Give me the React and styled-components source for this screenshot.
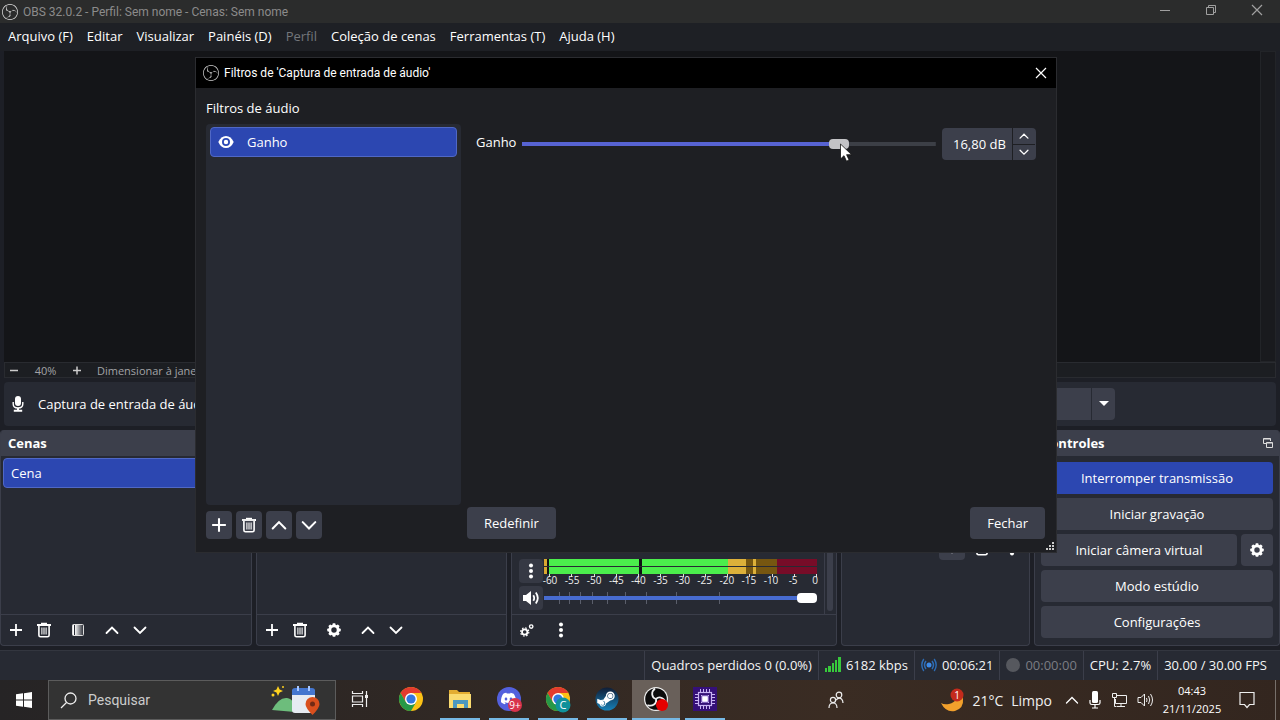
import { useState } from "react";
import styled, { createGlobalStyle } from "styled-components";
import { SiObsstudio, SiDiscord } from "react-icons/si";
import { FaSteamSymbol } from "react-icons/fa";

const METER_LABELS = [-60, -55, -50, -45, -40, -35, -30, -25, -20, -15, -10, -5, 0];
const FADER_TICKS = [15, 25, 36, 48, 63, 81, 102, 132, 175];

const PlusIcon = ({ size = 14 }) => (
  <svg width={size} height={size} viewBox="0 0 14 14" stroke="#fff" strokeWidth="1.8">
    <path d="M7 1v12M1 7h12" />
  </svg>
);

const TrashIcon = () => (
  <svg width="16" height="16" viewBox="0 0 16 16" fill="none" stroke="#fff">
    <path d="M1 3h14" strokeWidth="1.8" />
    <path d="M5 1.5h6" strokeWidth="1.4" />
    <path d="M2.9 4v9.2q0 1.6 1.6 1.6h7q1.6 0 1.6-1.6V4" strokeWidth="1.6" />
    <path d="M5.9 5.5v7M8 5.5v7M10.1 5.5v7" strokeWidth="1.1" />
  </svg>
);

const ChevronIcon = ({ down, size = 14, stroke = 1.8 }) => (
  <svg
    width={size}
    height={size}
    viewBox="0 0 14 14"
    fill="none"
    stroke="#fff"
    strokeWidth={stroke}
    strokeLinecap="round"
  >
    <path d={down ? "M1.5 4.5L7 10l5.5-5.5" : "M1.5 10L7 4.5l5.5 5.5"} />
  </svg>
);

const GearIcon = ({ size = 14 }) => (
  <svg width={size} height={size} viewBox="0 0 16 16">
    <circle cx="8" cy="8" r="4.7" fill="none" stroke="#fff" strokeWidth="3.2" />
    {[0, 45, 90, 135, 180, 225, 270, 315].map((angle) => (
      <rect
        key={angle}
        x="6.3"
        y="0.3"
        width="3.4"
        height="3"
        rx="0.8"
        fill="#fff"
        transform={`rotate(${angle} 8 8)`}
      />
    ))}
  </svg>
);

const GearsIcon = () => (
  <svg width="14" height="14" viewBox="0 0 14 14" fill="none" stroke="#fff">
    <circle cx="4.7" cy="9" r="2.7" strokeWidth="1.8" />
    <circle cx="4.7" cy="9" r="4.1" strokeWidth="1.2" strokeDasharray="1.6 1.62" />
    <circle cx="11.2" cy="3.6" r="1.7" strokeWidth="1.4" />
  </svg>
);

const DotsIcon = () => (
  <svg width="6" height="16" viewBox="0 0 6 16" fill="#fff">
    <circle cx="3" cy="2.5" r="2" />
    <circle cx="3" cy="8" r="2" />
    <circle cx="3" cy="13.5" r="2" />
  </svg>
);

const FilterIcon = () => (
  <svg width="14" height="14" viewBox="0 0 14 14">
    <defs>
      <linearGradient id="fade">
        <stop offset="0.2" stopColor="#fff" />
        <stop offset="1" stopColor="#272a33" />
      </linearGradient>
    </defs>
    <rect x="1.5" y="1.5" width="11" height="11" rx="1" fill="url(#fade)" stroke="#ddd" />
    <path d="M3.5 2v10" stroke="#272a33" />
  </svg>
);

const MicIcon = () => (
  <svg width="12" height="16" viewBox="0 0 12 16" fill="none" stroke="#fff">
    <rect x="3" y="0" width="6" height="10" rx="3" fill="#fff" stroke="none" />
    <path d="M1.2 6v2q0 4 4.8 4t4.8-4V6" strokeWidth="1.4" />
    <path d="M6 12v3M1.8 14.8h8.4" strokeWidth="2" />
  </svg>
);

const EyeIcon = () => (
  <svg width="16" height="12" viewBox="0 0 16 12">
    <path d="M8 0Q13 0 15.7 6 13 12 8 12T.3 6Q3 0 8 0z" fill="#fff" />
    <circle cx="8" cy="6" r="3.1" fill="#fff" stroke="#2b49b6" strokeWidth="1.8" />
  </svg>
);

const SpeakerIcon = () => (
  <svg width="18" height="16" viewBox="0 0 18 16" fill="none" stroke="#fff">
    <path d="M1 5h3l5-4v14l-5-4H1z" fill="#fff" stroke="none" />
    <path d="M11.3 5.2q1.8 2.8 0 5.6M13.8 2.5q4 5.5 0 11" strokeWidth="1.8" />
  </svg>
);

const CloseIcon = () => (
  <svg width="12" height="12" viewBox="0 0 12 12" stroke="currentColor" strokeWidth="1.2">
    <path d="M1 1l10 10M11 1L1 11" />
  </svg>
);

const RestoreIcon = () => (
  <svg width="12" height="12" viewBox="0 0 12 12" fill="none" stroke="currentColor">
    <path d="M1.5 3.5h7v7h-7zM3.5 3.5v-2h7v7h-2" />
  </svg>
);

const PopOutIcon = () => (
  <svg width="12" height="12" viewBox="0 0 12 12" fill="none" stroke="#ddd">
    <path d="M4 6.5H1.5v-5h7V4M1.5 2h7" />
    <path d="M4.5 5.5h6v5h-6zM4.5 6h6" />
  </svg>
);

const ChromeIcon = ({ badge }) => (
  <svg width="28" height="28" viewBox="-1 0 28 28">
    <circle cx="13" cy="14" r="12" fill="#fbc116" />
    <path d="M13 8h10.4A12 12 0 0 0 2.6 8l5.2 9z" fill="#e33b2e" />
    <path d="M2.6 8A12 12 0 0 0 13 26l5.2-9-5.2 3-5.2-3z" fill="#279847" />
    <circle cx="13" cy="14" r="6" fill="#fff" />
    <circle cx="13" cy="14" r="4.6" fill="#3277e0" />
    {badge && (
      <>
        <circle cx="18" cy="20" r="7.5" fill="#10919a" />
        <text x="18" y="24" textAnchor="middle" fill="#fff" fontSize="11">
          {badge}
        </text>
      </>
    )}
  </svg>
);

const FolderIcon = () => (
  <svg width="24" height="22" viewBox="0 0 24 22">
    <path d="M1 2h8l2 2h11v16H1z" fill="#e3ad32" />
    <path d="M1 6h22v14H1z" fill="#fadb70" />
    <path d="M5 12h15v8h-4v-4H9v4H5z" fill="#4c98c0" />
  </svg>
);

const CpuIcon = () => (
  <svg width="24" height="24" viewBox="0 0 24 24" fill="none" stroke="#c9b3f5">
    <rect width="24" height="24" fill="#351078" stroke="none" />
    <rect x="5.5" y="5.5" width="13" height="13" strokeWidth="1.2" />
    <path d="M7.5 2v3M10.5 2v3M13.5 2v3M16.5 2v3M7.5 19v3M10.5 19v3M13.5 19v3M16.5 19v3M2 7.5h3M2 10.5h3M2 13.5h3M2 16.5h3M19 7.5h3M19 10.5h3M19 13.5h3M19 16.5h3" />
    <rect x="9" y="9" width="6" height="6" fill="#fff" />
    <path d="M8 8l2 2M16 8l-2 2M8 16l2-2M16 16l-2-2" />
  </svg>
);

const TaskViewIcon = () => (
  <svg width="18" height="18" viewBox="0 0 18 18" fill="none" stroke="#eee" strokeWidth="1.2">
    <path d="M1.5 1v2.5h10V1M1.5 17v-2.5h10V17M1.5 6h10v6h-10zM15.5 1v16" />
    <path d="M14 6.5h3" strokeWidth="3" />
  </svg>
);

const SearchArt = () => (
  <svg width="50" height="30" viewBox="1 0 50 30">
    <path d="M2 25q7-13 15-12 8 1 8 14z" fill="#6dbd7c" />
    <path d="M8 1l1.6 3.6L13 6 9.6 7.6 8 11 6.5 7.6 3 6l3.5-1.4z" fill="#ffd21f" />
    <circle cx="3" cy="10" r="1.5" fill="#ffd21f" />
    <circle cx="13" cy="2" r="1" fill="#ffd21f" />
    <rect x="22" y="4" width="23" height="24" rx="3" fill="#e6ebf2" />
    <path d="M22 10V6q0-3 3-3h17q3 0 3 3v4z" fill="#4476cf" />
    <path d="M28 1v5M39 1v5" stroke="#a8c8ff" strokeWidth="2" />
    <path d="M42.5 30q-7-7-7-11a7 7 0 0 1 14 0q0 4-7 11z" fill="#d94f1d" />
    <circle cx="42.5" cy="19" r="2.5" fill="#712a15" />
  </svg>
);

const WeatherIcon = () => (
  <svg width="28" height="26" viewBox="0 0 28 26">
    <path d="M16 2q4 11-7 14-5 1-8-1 5 10 14 8 9-3 8-12-1-6-7-9z" fill="#f2a02c" />
    <circle cx="17" cy="7" r="6.5" fill="#c42b1c" />
    <text x="17" y="11" textAnchor="middle" fill="#fff" fontSize="10">
      1
    </text>
  </svg>
);

const LevelMeter = () => (
  <svg width="280" height="27" viewBox="-4 0 280 27">
    <rect x="0" width="3" height="15" fill="#d9a730" />
    <rect x="3" width="2" height="15" fill="#101014" />
    <rect x="5" width="179" height="15" fill="#4bee4c" />
    <rect x="95" width="3" height="15" fill="#101014" />
    <rect x="184" width="18" height="15" fill="#dcb03a" />
    <rect x="202" width="31" height="15" fill="#765610" />
    <rect x="209" width="3" height="15" fill="#dcb03a" />
    <rect x="233" width="40" height="15" fill="#770c28" />
    <rect y="7" width="273" height="1" fill="#272a33" />
    {METER_LABELS.map((label, i) => (
      <g key={label}>
        <rect x={Math.round(5 + i * 22.25)} y="15" width="1" height="3" fill="#ddd" />
        <text
          x={i === 12 ? 271 : 6 + i * 22.1}
          y="25"
          textAnchor="middle"
          fill="#eee"
          fontSize="10"
        >
          {label}
        </text>
      </g>
    ))}
  </svg>
);

const App = () => {
  const [gain, setGain] = useState(16.8);
  const [volume, setVolume] = useState(100);
  const gainText = `${gain.toFixed(2).replace(".", ",")} dB`;

  return (
    <Page>
      <GlobalStyle />
      <TitleBar>
        <SiObsstudio size={16} color="#ddd" />
        <TitleText>OBS 32.0.2 - Perfil: Sem nome - Cenas: Sem nome</TitleText>
        <WindowButton aria-label="Minimizar">
          <svg width="12" height="12" stroke="currentColor">
            <path d="M1 6.5h10" />
          </svg>
        </WindowButton>
        <WindowButton aria-label="Restaurar">
          <RestoreIcon />
        </WindowButton>
        <WindowButton aria-label="Fechar janela">
          <CloseIcon />
        </WindowButton>
      </TitleBar>

      <MenuBar>
        <MenuItem>Arquivo (F)</MenuItem>
        <MenuItem>Editar</MenuItem>
        <MenuItem>Visualizar</MenuItem>
        <MenuItem>Painéis (D)</MenuItem>
        <MenuItem disabled>Perfil</MenuItem>
        <MenuItem>Coleção de cenas</MenuItem>
        <MenuItem>Ferramentas (T)</MenuItem>
        <MenuItem>Ajuda (H)</MenuItem>
      </MenuBar>

      <Preview>
        <Canvas />
        <PreviewScroll />
      </Preview>
      <ZoomBar>
        <ZoomButton aria-label="Diminuir zoom">
          <svg width="10" height="10" stroke="#ccc" strokeWidth="1.5">
            <path d="M1 4.5h8" />
          </svg>
        </ZoomButton>
        <ZoomValue>40%</ZoomValue>
        <ZoomButton aria-label="Aumentar zoom">
          <svg width="10" height="10" stroke="#ccc" strokeWidth="1.5">
            <path d="M1 4.5h8M5 .5v8" />
          </svg>
        </ZoomButton>
        <ZoomMode>Dimensionar à janela</ZoomMode>
      </ZoomBar>

      <ContextBar>
        <MicIcon />
        <ContextName>Captura de entrada de áudio</ContextName>
        <DeviceBox>
          <DeviceArrow aria-label="Dispositivo">
            <svg width="10" height="6" fill="#fff">
              <path d="M0 0h10L5 5z" />
            </svg>
          </DeviceArrow>
        </DeviceBox>
      </ContextBar>

      <Docks>
        <Dock>
          <DockHeader>Cenas</DockHeader>
          <SceneList>
            <SceneItem>Cena</SceneItem>
          </SceneList>
          <DockFooter>
            <ToolButton aria-label="Adicionar cena">
              <PlusIcon />
            </ToolButton>
            <ToolButton aria-label="Remover cena">
              <TrashIcon />
            </ToolButton>
            <ToolButton aria-label="Filtros da cena" $wide>
              <FilterIcon />
            </ToolButton>
            <ToolButton aria-label="Mover cena para cima">
              <ChevronIcon />
            </ToolButton>
            <ToolButton aria-label="Mover cena para baixo">
              <ChevronIcon down />
            </ToolButton>
          </DockFooter>
        </Dock>

        <Dock>
          <DockHeader />
          <DockBody />
          <DockFooter>
            <ToolButton aria-label="Adicionar fonte">
              <PlusIcon />
            </ToolButton>
            <ToolButton aria-label="Remover fonte">
              <TrashIcon />
            </ToolButton>
            <ToolButton aria-label="Propriedades da fonte" $wide>
              <GearIcon />
            </ToolButton>
            <ToolButton aria-label="Mover fonte para cima">
              <ChevronIcon />
            </ToolButton>
            <ToolButton aria-label="Mover fonte para baixo">
              <ChevronIcon down />
            </ToolButton>
          </DockFooter>
        </Dock>

        <Dock>
          <DockHeader />
          <MixerBody>
            <MixerTracks>
              <MixerRow>
                <MixerButton aria-label="Opções de áudio">
                  <DotsIcon />
                </MixerButton>
                <LevelMeter />
              </MixerRow>
              <MixerRow>
                <MixerButton aria-label="Silenciar">
                  <SpeakerIcon />
                </MixerButton>
                <Fader>
                  <svg width="273" height="14" stroke="#5a5e6b">
                    {FADER_TICKS.map((x) => (
                      <path key={x} d={`M${x + 0.5} 1v12`} />
                    ))}
                  </svg>
                  <Slider
                    aria-label="Volume"
                    min="0"
                    max="100"
                    value={volume}
                    onChange={(e) => setVolume(Number(e.target.value))}
                    $fill="#476bd0"
                    $knob="#fff"
                    style={{ "--pos": `${volume}%` }}
                  />
                </Fader>
              </MixerRow>
            </MixerTracks>
            <MixerScroll />
          </MixerBody>
          <DockFooter>
            <ToolButton aria-label="Propriedades avançadas de áudio">
              <GearsIcon />
            </ToolButton>
            <ToolButton aria-label="Menu do mixer" $wide>
              <DotsIcon />
            </ToolButton>
          </DockFooter>
        </Dock>

        <Dock>
          <DockHeader />
          <TransitionBody>
            <TransitionButton aria-label="Adicionar transição" $active>
              <PlusIcon size={12} />
            </TransitionButton>
            <TransitionButton aria-label="Remover transição">
              <TrashIcon />
            </TransitionButton>
            <TransitionButton aria-label="Opções de transição">
              <DotsIcon />
            </TransitionButton>
          </TransitionBody>
        </Dock>

        <Dock>
          <DockHeader>
            Controles
            <PopOutIcon />
          </DockHeader>
          <ControlsBody>
            <Button $primary>Interromper transmissão</Button>
            <Button>Iniciar gravação</Button>
            <CameraRow>
              <Button>Iniciar câmera virtual</Button>
              <Button aria-label="Configurar câmera virtual">
                <GearIcon />
              </Button>
            </CameraRow>
            <Button>Modo estúdio</Button>
            <Button>Configurações</Button>
          </ControlsBody>
        </Dock>
      </Docks>

      <StatusBar>
        <StatusItem>Quadros perdidos 0 (0.0%)</StatusItem>
        <StatusItem>
          <svg width="16" height="15" fill="#37c93c">
            <path d="M0 11h2v4H0zM3 9h3v6H3zM7 6h2v9H7zM10 3h2v12h-2zM13 0h3v15h-3z" />
          </svg>
          6182 kbps
        </StatusItem>
        <StatusItem>
          <svg width="16" height="16" viewBox="0 0 16 16" fill="none" stroke="#2d6cb5">
            <circle cx="8" cy="8" r="2.5" fill="#3d8ae6" stroke="none" />
            <path d="M5 4q-3 4 0 8M11 4q3 4 0 8" strokeWidth="1.5" />
            <path d="M2.8 2q-4 6 0 12M13.2 2q4 6 0 12" strokeWidth="1.4" />
          </svg>
          00:06:21
        </StatusItem>
        <StatusItem $dim>
          <svg width="14" height="14" fill="#56585e">
            <circle cx="7" cy="7" r="7" />
          </svg>
          00:00:00
        </StatusItem>
        <StatusItem>CPU: 2.7%</StatusItem>
        <StatusItem>30.00 / 30.00 FPS</StatusItem>
      </StatusBar>

      <TaskBar>
        <StartButton aria-label="Iniciar">
          <svg width="16" height="16" fill="#fff">
            <path d="M0 2.3L7 1.3V7.5H0zM8 1.2L16 0v7.5H8zM0 8.5h7v6.2l-7-1zM8 8.5h8V16l-8-1.2z" />
          </svg>
        </StartButton>
        <SearchBox>
          <svg width="17" height="17" fill="none" stroke="#eee" strokeWidth="1.3">
            <circle cx="10.5" cy="6.5" r="5.5" />
            <path d="M6.5 10.5L1 16" />
          </svg>
          <SearchInput placeholder="Pesquisar" aria-label="Pesquisar" />
          <SearchArt />
        </SearchBox>
        <Apps>
          <AppButton aria-label="Visão de tarefas">
            <TaskViewIcon />
          </AppButton>
          <AppButton aria-label="Chrome">
            <ChromeIcon />
          </AppButton>
          <AppButton aria-label="Explorador de arquivos" $open>
            <FolderIcon />
          </AppButton>
          <AppButton aria-label="Discord" $open>
            <svg width="28" height="28" viewBox="0 0 28 28">
              <circle cx="14" cy="14" r="12" fill="#5360dd" />
              <SiDiscord x="6" y="6" size={15} color="#fff" />
              <circle cx="20" cy="20" r="7" fill="#d8334c" />
              <text x="20" y="24" textAnchor="middle" fill="#fff" fontSize="10">
                9+
              </text>
            </svg>
          </AppButton>
          <AppButton aria-label="Chrome, perfil C" $open>
            <ChromeIcon badge="C" />
          </AppButton>
          <AppButton aria-label="Steam" $open>
            <svg width="24" height="24" viewBox="0 0 24 24">
              <defs>
                <linearGradient id="steam" x2="0" y2="1">
                  <stop offset="0" stopColor="#111d35" />
                  <stop offset="1" stopColor="#1681b8" />
                </linearGradient>
              </defs>
              <circle cx="12" cy="12" r="11.5" fill="url(#steam)" />
              <FaSteamSymbol x="1" y="2" size={20} color="#fff" />
            </svg>
          </AppButton>
          <AppButton aria-label="OBS" $open $active>
            <svg width="28" height="28" viewBox="0 0 28 28">
              <circle cx="14" cy="14" r="12" fill="#eee" />
              <circle cx="14" cy="14" r="10.8" fill="#0b0b0b" />
              <g fill="none" stroke="#eee" strokeWidth="1.8">
                {[0, 120, 240].map((angle) => (
                  <path
                    key={angle}
                    d="M14 14q-3.5-1-3.8-4.5T13 3.5"
                    transform={`rotate(${angle} 14 14)`}
                  />
                ))}
              </g>
              <circle cx="20" cy="20" r="6" fill="#e60000" />
            </svg>
          </AppButton>
          <AppButton aria-label="Monitor de CPU" $open>
            <CpuIcon />
          </AppButton>
        </Apps>
        <PeopleButton aria-label="Pessoas">
          <svg width="16" height="18" viewBox="0 0 16 18" fill="none" stroke="#eee" strokeWidth="1.2">
            <circle cx="5" cy="9" r="2.6" />
            <path d="M1 17q0-5 4-5t4 5" />
            <circle cx="11" cy="4" r="2.8" />
            <path d="M8 9q3-3 5.5-1Q15 9.5 15 12" />
          </svg>
        </PeopleButton>
        <Weather>
          <WeatherIcon />
          <span>21°C</span>
          <span>Limpo</span>
        </Weather>
        <Tray>
          <ChevronIcon stroke={1.3} />
          <svg width="12" height="18" viewBox="0 0 12 18" fill="none" stroke="#fff">
            <rect x="3" y="0" width="6" height="12" rx="1.5" fill="#fff" stroke="none" />
            <path d="M1 9v3q0 1.5 2 1.5h6q2 0 2-1.5V9M6 14v3M3 17h6" strokeWidth="1.2" />
          </svg>
          <svg width="16" height="16" viewBox="0 0 16 16" fill="none" stroke="#eee">
            <path d="M5.5 3.5h10v8H4.500V7M10 11.5v3M6 14.5h8M1.5 1.5h4v4h-4zM3.5 5.5v9h2" />
          </svg>
          <svg width="17" height="16" viewBox="0 0 17 16" fill="none" stroke="#eee">
            <path d="M1 5.5h3l3.5-3.5v12L4 10.5H1zM9.5 6q1 2 0 4M11.5 4q2.5 4 0 8M13.5 2q4 6 0 12" />
          </svg>
        </Tray>
        <Clock>
          <span>04:43</span>
          <span>21/11/2025</span>
        </Clock>
        <NoticeButton aria-label="Notificações">
          <svg width="16" height="18" viewBox="0 0 16 18" fill="none" stroke="#eee" strokeWidth="1.2">
            <path d="M1 1.5h14v12h-4.5L8 16.5l-2.5-3H1z" />
          </svg>
        </NoticeButton>
      </TaskBar>

      <Dialog role="dialog" aria-label="Filtros">
        <DialogTitle>
          <SiObsstudio size={16} color="#ccc" />
          <span>Filtros de 'Captura de entrada de áudio'</span>
          <DialogClose aria-label="Fechar filtros">
            <CloseIcon />
          </DialogClose>
        </DialogTitle>
        <DialogBody>
          <FilterColumn>
            <FilterHeading>Filtros de áudio</FilterHeading>
            <FilterList>
              <FilterItem>
                <EyeIcon />
                Ganho
              </FilterItem>
            </FilterList>
            <FilterTools>
              <SquareButton aria-label="Adicionar filtro">
                <PlusIcon size={16} />
              </SquareButton>
              <SquareButton aria-label="Remover filtro">
                <TrashIcon />
              </SquareButton>
              <SquareButton aria-label="Mover filtro para cima">
                <ChevronIcon size={16} />
              </SquareButton>
              <SquareButton aria-label="Mover filtro para baixo">
                <ChevronIcon size={16} down />
              </SquareButton>
            </FilterTools>
          </FilterColumn>
          <SettingsColumn>
            <GainRow>
              <GainLabel htmlFor="gain">Ganho</GainLabel>
              <Slider
                id="gain"
                min="-30"
                max="30"
                step="0.1"
                value={gain}
                onChange={(e) => setGain(Number(e.target.value))}
                $fill="#5763d2"
                $knob="#c3c3c6"
                style={{ "--pos": `${((gain + 30) / 60) * 100}%` }}
              />
              <SpinBox>
                <SpinInput aria-label="Ganho em dB" value={gainText} readOnly />
                <SpinButtons>
                  <SpinButton aria-label="Aumentar" onClick={() => setGain(Math.min(30, gain + 0.1))}>
                    <ChevronIcon size={10} />
                  </SpinButton>
                  <SpinButton aria-label="Diminuir" onClick={() => setGain(Math.max(-30, gain - 0.1))}>
                    <ChevronIcon size={10} down />
                  </SpinButton>
                </SpinButtons>
              </SpinBox>
            </GainRow>
            <DialogActions>
              <Button>Redefinir</Button>
              <Button>Fechar</Button>
            </DialogActions>
          </SettingsColumn>
        </DialogBody>
        <SizeGrip width="8" height="8" fill="#ccc">
          <path d="M6 0h2v2H6zM3 3h2v2H3zM6 3h2v2H6zM0 6h2v2H0zM3 6h2v2H3zM6 6h2v2H6z" />
        </SizeGrip>
      </Dialog>

      <Pointer width="13" height="19" viewBox="0 0 13 19">
        <path
          d="M.5 1v15l3.5-3.3 2.5 5.5 2.6-1.2-2.5-5.3h5z"
          fill="#fff"
          stroke="#111"
          strokeWidth="0.8"
        />
      </Pointer>
    </Page>
  );
};

const GlobalStyle = createGlobalStyle`
  * {
    box-sizing: border-box;
  }
  body {
    margin: 0;
    background: #1d1f26;
    color: #fff;
    font-family: "Open Sans", "Noto Sans", sans-serif;
    font-size: 13px;
    line-height: 18px;
  }
  button, input {
    font: inherit;
    color: inherit;
    border: 0;
    margin: 0;
    padding: 0;
    background: none;
  }
  svg {
    flex-shrink: 0;
    display: block;
  }
`;

const Page = styled.div`
  position: relative;
  display: flex;
  flex-direction: column;
  min-height: 100vh;
  overflow: hidden;
`;

const TitleBar = styled.header`
  display: flex;
  align-items: center;
  height: 23px;
  padding-left: 2px;
  background: #2b2c2c;
  color: #a0a0a0;
`;

const TitleText = styled.span`
  flex: 1;
  padding-left: 5px;
  font-family: Roboto, sans-serif;
  font-size: 12px;
  color: #8b8b8b;
`;

const WindowButton = styled.button`
  display: grid;
  place-items: center;
  align-self: flex-start;
  width: 46px;
  height: 20px;
`;

const MenuBar = styled.nav`
  display: flex;
  align-items: center;
  gap: 14px;
  height: 28px;
  padding: 0 8px 2px;
  background: #1e2025;
`;

const MenuItem = styled.button`
  &:disabled {
    color: #74767b;
  }
`;

const Preview = styled.main`
  display: flex;
  flex: 1;
  min-height: 311px;
  padding: 0 4px;
`;

const Canvas = styled.div`
  flex: 1;
  background: #141518;
`;

const PreviewScroll = styled.div`
  width: 16px;
  border: 1px solid #222428;
  background: #191a1e;
`;

const ZoomBar = styled.div`
  display: flex;
  align-items: center;
  height: 16px;
  margin: 0 4px;
  padding-top: 2px;
  border: 1px solid #292b30;
  background: #1c1e22;
  color: #a2a3a6;
  font-size: 11px;
`;

const ZoomButton = styled.button`
  display: grid;
  place-items: center;
  width: 18px;
`;

const ZoomValue = styled.span`
  width: 45px;
  text-align: center;
`;

const ZoomMode = styled.span`
  padding-left: 11px;
`;

const ContextBar = styled.section`
  display: flex;
  align-items: center;
  height: 44px;
  margin: 4px 4px;
  padding-left: 8px;
  padding-right: 161px;
  border-radius: 4px;
  background: #272a33;
`;

const ContextName = styled.span`
  flex: 1;
  padding-left: 14px;
`;

const DeviceBox = styled.div`
  display: flex;
  justify-content: flex-end;
  width: 300px;
  height: 32px;
  border-radius: 4px;
  background: #3c3f4b;
`;

const DeviceArrow = styled.button`
  display: grid;
  place-items: center;
  width: 24px;
  border-left: 1px solid #272a33;
`;

const Docks = styled.section`
  display: grid;
  grid-template-columns: 252fr 251fr 326fr 189fr 246fr;
  gap: 4px;
  min-height: 216px;
`;

const Dock = styled.section`
  display: flex;
  flex-direction: column;
  min-width: 0;
  border: 1px solid #3b3e4a;
  border-top: 0;
  border-radius: 4px;
  background: #272a33;
  overflow: hidden;
`;

const DockHeader = styled.h2`
  display: flex;
  align-items: center;
  justify-content: space-between;
  height: 26px;
  margin: 0;
  padding: 0 5px 0 7px;
  background: #3c3f4b;
  font-size: 13px;
  font-weight: 700;
`;

const DockBody = styled.div`
  flex: 1;
`;

const SceneList = styled.ul`
  flex: 1;
  margin: 0;
  padding: 2px;
  list-style: none;
`;

const SceneItem = styled.li`
  padding: 5px 7px;
  border: 1px solid #5068c5;
  border-radius: 4px;
  background: #2c47b1;
`;

const DockFooter = styled.div`
  display: flex;
  align-items: center;
  gap: 4px;
  height: 31px;
  padding: 0 3px;
  border-top: 1px solid #3b3e4a;
`;

const ToolButton = styled.button`
  display: grid;
  place-items: center;
  width: ${(props) => (props.$wide ? "36px" : "24px")};
  height: 24px;
`;

const MixerBody = styled.div`
  display: flex;
  flex: 1;
  padding-right: 3px;
`;

const MixerTracks = styled.div`
  display: flex;
  flex: 1;
  flex-direction: column;
  justify-content: flex-end;
  padding: 0 0 4px 7px;
  border-right: 1px solid #3b3e4a;
`;

const MixerRow = styled.div`
  display: flex;
  align-items: flex-start;

  & > svg {
    margin-left: -3px;
  }
`;

const MixerButton = styled.button`
  display: grid;
  place-items: center;
  width: 24px;
  height: 24px;
  border-radius: 4px;
  background: #363944;
`;

const Fader = styled.div`
  display: grid;
  align-items: center;
  align-self: center;
  width: 273px;
  margin-left: 1px;

  & > * {
    grid-area: 1 / 1;
  }
`;

const MixerScroll = styled.div`
  width: 6px;
  margin: 0 0 3px 2px;
  border-radius: 3px;
  background: #3c3f4b;
`;

const Slider = styled.input.attrs({ type: "range" })`
  appearance: none;
  flex: 1;
  min-width: 0;
  height: 10px;
  background: linear-gradient(${(props) => props.$fill}, ${(props) => props.$fill}) left center /
      var(--pos) 4px no-repeat,
    linear-gradient(#3c3f46, #3c3f46) center / 100% 4px no-repeat;

  &::-webkit-slider-thumb {
    appearance: none;
    width: 20px;
    height: 10px;
    border-radius: 4px;
    background: ${(props) => props.$knob};
  }
`;

const TransitionBody = styled.div`
  display: flex;
  flex: 1;
  align-items: flex-start;
  justify-content: flex-end;
  gap: 4px;
  padding: 80px 4px 0;
`;

const TransitionButton = styled.button`
  display: grid;
  place-items: center;
  width: 26px;
  height: 24px;
  border-radius: 4px;
  background: ${(props) => (props.$active ? "#3c3f4b" : "none")};
`;

const ControlsBody = styled.div`
  display: flex;
  flex-direction: column;
  gap: 4px;
  padding: 6px;
`;

const Button = styled.button`
  display: grid;
  place-items: center;
  height: 32px;
  padding: 0 17px;
  border-radius: 4px;
  background: ${(props) => (props.$primary ? "#2c47b1" : "#3c3f4b")};
`;

const CameraRow = styled.div`
  display: grid;
  grid-template-columns: 1fr 32px;
  gap: 4px;

  ${Button} {
    padding: 0;
  }
`;

const StatusBar = styled.footer`
  display: flex;
  justify-content: flex-end;
  height: 30px;
  margin-top: 4px;
  padding-right: 7px;
  border-top: 1px solid #33363f;
  background: #272a33;
`;

const StatusItem = styled.div`
  display: flex;
  align-items: center;
  gap: 5px;
  padding: 0 6px 2px;
  border-left: 1px solid #3b3e4a;
  color: ${(props) => (props.$dim ? "#7b7d83" : "#f5f5f5")};
  white-space: nowrap;
`;

const TaskBar = styled.footer`
  display: flex;
  height: 40px;
  background: linear-gradient(to right, #262425, #302824 35%, #3a2c23 65%, #33261f);
`;

const StartButton = styled.button`
  display: grid;
  place-items: center;
  width: 48px;
`;

const SearchBox = styled.div`
  display: flex;
  align-items: center;
  width: 288px;
  padding: 0 14px 0 11px;
  border: 1px solid #5c5c5c;
  background: #333;
`;

const SearchInput = styled.input`
  flex: 1;
  min-width: 0;
  padding-left: 11px;
  font-family: Roboto, sans-serif;
  font-size: 14px;
  outline: none;

  &::placeholder {
    color: #ccc;
    opacity: 1;
  }
`;

const Apps = styled.div`
  display: flex;
  gap: 1px;
`;

const AppButton = styled.button`
  display: grid;
  place-items: center;
  width: 48px;
  border-bottom: 2px solid transparent;
  background: ${(props) => (props.$active ? "#69605a" : "none")};
  background-image: ${(props) => (props.$open ? "linear-gradient(#76b9e5, #76b9e5)" : "none")};
  background-repeat: no-repeat;
  background-origin: border-box;
  background-position: center bottom;
  background-size: ${(props) => (props.$active ? "48px 2px" : "40px 2px")};

  &:first-child {
    width: 50px;
    padding-right: 2px;
  }
`;

const PeopleButton = styled.button`
  display: grid;
  place-items: center;
  width: 48px;
  margin-left: auto;
`;

const Weather = styled.div`
  display: flex;
  align-items: center;
  gap: 8px;
  margin-left: 80px;
  padding-top: 2px;
  color: #f0f0f0;
  font-size: 14px;

  svg {
    margin-right: -4px;
  }
`;

const Tray = styled.div`
  display: flex;
  align-items: center;
  gap: 10px;
  margin-left: 13px;
`;

const Clock = styled.div`
  display: flex;
  flex-direction: column;
  justify-content: center;
  width: 76px;
  font-size: 11px;
  text-align: center;
`;

const NoticeButton = styled.button`
  display: grid;
  place-items: center;
  width: 46px;
  margin-right: 4px;
  padding-right: 11px;
  border-right: 1px solid #77706b;
`;

const Dialog = styled.section`
  position: absolute;
  top: 57px;
  left: 195px;
  right: 223px;
  border: 1px solid #2b2c30;
  background: #1e1f23;
`;

const DialogTitle = styled.header`
  display: flex;
  align-items: center;
  gap: 5px;
  height: 30px;
  padding-left: 7px;
  background: #000;
  font-family: Roboto, sans-serif;
  font-size: 12px;
`;

const DialogClose = styled.button`
  display: grid;
  place-items: center;
  width: 30px;
  height: 30px;
  margin-left: auto;
`;

const DialogBody = styled.div`
  display: flex;
  gap: 6px;
  padding: 11px 11px 13px 10px;
`;

const FilterColumn = styled.div`
  display: flex;
  flex-direction: column;
  width: 255px;
`;

const FilterHeading = styled.h3`
  margin: 0 0 7px;
  font-size: 13px;
  font-weight: 400;
`;

const FilterList = styled.ul`
  min-height: 381px;
  margin: 0 0 6px;
  padding: 3px 4px;
  border-radius: 4px;
  background: #272a33;
  list-style: none;
`;

const FilterItem = styled.li`
  display: flex;
  align-items: center;
  gap: 13px;
  height: 30px;
  padding: 0 7px;
  border: 1px solid #5068c5;
  border-radius: 4px;
  background: #2c47b1;
`;

const FilterTools = styled.div`
  display: flex;
  gap: 4px;
`;

const SquareButton = styled.button`
  display: grid;
  place-items: center;
  width: 26px;
  height: 28px;
  border-radius: 4px;
  background: #3c3f4b;
`;

const SettingsColumn = styled.div`
  display: flex;
  flex: 1;
  flex-direction: column;
  justify-content: space-between;
  min-width: 0;
`;

const GainRow = styled.div`
  display: flex;
  align-items: center;
  gap: 6px;
  padding: 29px 9px 0;
`;

const GainLabel = styled.label`
  padding-bottom: 4px;
`;

const SpinBox = styled.div`
  display: flex;
  width: 94px;
  height: 32px;
  border-radius: 4px;
  background: #3c3f4b;
`;

const SpinInput = styled.input`
  flex: 1;
  min-width: 0;
  padding-left: 11px;
`;

const SpinButtons = styled.div`
  display: flex;
  flex-direction: column;
  width: 24px;
  padding-right: 1px;
  border-left: 1px solid #1e1f23;
`;

const SpinButton = styled.button`
  display: grid;
  flex: 1;
  place-items: center;

  & + & {
    border-top: 1px solid #1e1f23;
  }
`;

const DialogActions = styled.div`
  display: flex;
  justify-content: space-between;
`;

const SizeGrip = styled.svg`
  position: absolute;
  right: 2px;
  bottom: 2px;
`;

const Pointer = styled.svg`
  position: absolute;
  top: 143px;
  left: 840px;
`;

export default App;
